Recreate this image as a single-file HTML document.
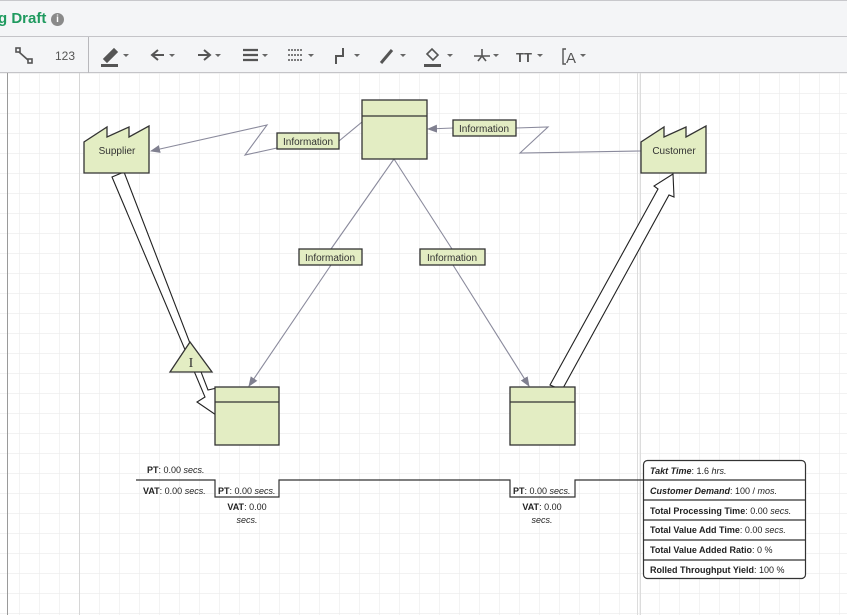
<!DOCTYPE html>
<html><head><meta charset="utf-8"><style>
html,body{margin:0;padding:0;width:847px;height:615px;overflow:hidden;background:#fff;font-family:"Liberation Sans",sans-serif}
.top{position:absolute;left:0;top:0;width:847px;height:36px;background:#f4f5f7;border-top:1px solid #c8c8cc;box-sizing:border-box}
.title{position:absolute;left:-2px;top:9px;font-size:15px;font-weight:bold;color:#1f9a5f}
.info{position:absolute;left:51px;top:12px;width:13px;height:13px;border-radius:50%;background:#8a8a8a;color:#fff;font-size:10px;font-weight:bold;text-align:center;line-height:13px}
.tb{position:absolute;left:0;top:36px;width:847px;height:37px;background:#f4f5f7;border-top:1px solid #c4c4c8;border-bottom:1px solid #c4c4c8;box-sizing:border-box}
.sep{position:absolute;left:88px;top:0;width:1px;height:36px;background:#b8b8bc}
</style></head><body>
<div class="top"><div class="title">g Draft</div><div class="info">i</div></div>
<div class="tb"><div class="sep"></div>
<svg width="847" height="36" style="position:absolute;left:0;top:0" fill="none" stroke="#555" stroke-width="1.6">
<rect x="16" y="11" width="4" height="4"/><rect x="28" y="22" width="4" height="4"/><path d="M19 15 L28 23"/>
<text x="55" y="23" font-size="12" fill="#555" stroke="none" font-family="Liberation Sans">123</text>
<path d="M104 22 L114 12 L117 15 L107 25 Z" fill="#555"/><rect x="101" y="27" width="17" height="3" fill="#555" stroke="none"/>
<path d="M158 13 L152 18 L158 23 M153 18 H164" stroke-width="2"/>
<path d="M204 13 L210 18 L204 23 M198 18 H209" stroke-width="2"/>
<path d="M243 13 H258 M243 18 H258 M243 23 H258" stroke-width="2.2"/>
<path d="M288 13 H303 M288 18 H303 M288 23 H303" stroke-width="1.6" stroke-dasharray="2 1"/>
<path d="M336 27 V19 H343 V11" stroke-width="2"/>
<path d="M381 26 L392 13" stroke-width="3"/>
<path d="M427 17 L432 12 L438 18 L433 23 Z" stroke-width="1.6"/><rect x="424" y="27" width="17" height="3" fill="#555" stroke="none"/>
<path d="M474 19 H490 M482 19 V12 M478 24 L482 19 L486 24" stroke-width="1.6"/>
<text x="516" y="25" font-size="13" font-weight="bold" fill="#555" stroke="none" font-family="Liberation Sans">TT</text>
<path d="M566 12 H563 V27 H566" stroke-width="1.4"/><text x="566" y="26" font-size="15" fill="#555" stroke="none" font-family="Liberation Sans">A</text>
<g fill="#666" stroke="none">
<path d="M123 17 h6 l-3 3z"/><path d="M169 17 h6 l-3 3z"/><path d="M215 17 h6 l-3 3z"/><path d="M262 17 h6 l-3 3z"/><path d="M308 17 h6 l-3 3z"/><path d="M354 17 h6 l-3 3z"/><path d="M400 17 h6 l-3 3z"/><path d="M447 17 h6 l-3 3z"/><path d="M493 17 h6 l-3 3z"/><path d="M537 17 h6 l-3 3z"/><path d="M580 17 h6 l-3 3z"/>
</g></svg></div>
<svg width="847" height="542" viewBox="0 73 847 542" style="position:absolute;left:0;top:73px" font-family="Liberation Sans">
<defs><pattern id="g" x="19" y="13" width="20" height="20" patternUnits="userSpaceOnUse"><path d="M0 0 V20 M0 0 H20" stroke="#ebebeb" stroke-width="1.2" fill="none"/></pattern>
<marker id="ar" markerWidth="10" markerHeight="8" refX="9" refY="4" orient="auto" markerUnits="userSpaceOnUse"><path d="M0 0 L10 4 L0 8 Z" fill="#808090"/></marker></defs>
<rect x="0" y="73" width="847" height="542" fill="url(#g)"/>
<path d="M7.5 73 V615" stroke="#9a9a9a"/><path d="M79.5 73 V615" stroke="#d6d6d6"/>
<path d="M637.5 73 V615 M640.5 73 V615" stroke="#dcdcdc"/>
<g stroke="#8a8a9c" stroke-width="1.1" fill="none">
<path d="M362 122 L339 141"/><path d="M277 148 L245 155 L267 125 L151 151" marker-end="url(#ar)"/>
<path d="M641 151 L520 153 L548 127 L516 128"/><path d="M453 128 L428 129" marker-end="url(#ar)"/>
<path d="M394 159 L331 249"/><path d="M331 265 L249 386" marker-end="url(#ar)"/>
<path d="M394 159 L452 249"/><path d="M453 265 L529 386" marker-end="url(#ar)"/>
</g>
<g stroke="#222" stroke-width="1.1" fill="#fff">
<path d="M112 177 L124 172 L208 390 L217 388 L216 415 L197 402 L205 397 Z"/>
<path d="M550 385 L562 390 L669 195 L674 197 L673 174 L654 186 L658 189 Z"/>
</g>
<g stroke="#333" stroke-width="1.3" fill="#e3edc3">
<path d="M84 173 V142 L107 127 V137 L129 127 V137 L149 126 V173 Z"/>
<path d="M641 173 V142 L664 127 V137 L686 127 V137 L706 126 V173 Z"/>
<rect x="362" y="100" width="65" height="59"/><path d="M362 116 H427"/>
<rect x="215" y="387" width="64" height="58"/><path d="M215 402 H279"/>
<rect x="510" y="387" width="65" height="58"/><path d="M510 402 H575"/>
<path d="M170 372 L190 342 L212 372 Z"/>
<rect x="277" y="133" width="62" height="16"/><rect x="453" y="120" width="63" height="16"/>
<rect x="299" y="249" width="63" height="16"/><rect x="420" y="249" width="65" height="16"/>
</g>
<g font-size="10" fill="#333" text-anchor="middle">
<text x="117" y="154">Supplier</text><text x="674" y="154">Customer</text>
<text x="308" y="145">Information</text><text x="484" y="132">Information</text>
<text x="330" y="261">Information</text><text x="452" y="261">Information</text>
<text x="191" y="367" font-size="14" font-family="Liberation Serif">I</text>
</g>
<path d="M136 480 H215 V497 H279 V480 H510 V497 H575 V480 H643" stroke="#333" stroke-width="1.2" fill="none"/>
<g font-size="9" fill="#222">
<text x="147" y="473"><tspan font-weight="bold">PT</tspan>: 0.00 <tspan font-style="italic">secs.</tspan></text>
<text x="143" y="494"><tspan font-weight="bold">VAT</tspan>: 0.00 <tspan font-style="italic">secs.</tspan></text>
<text x="218" y="494"><tspan font-weight="bold">PT</tspan>: 0.00 <tspan font-style="italic">secs.</tspan></text>
<text x="513" y="494"><tspan font-weight="bold">PT</tspan>: 0.00 <tspan font-style="italic">secs.</tspan></text>
<g text-anchor="middle"><text x="247" y="510"><tspan font-weight="bold">VAT</tspan>: 0.00</text><text x="247" y="523" font-style="italic">secs.</text>
<text x="542" y="510"><tspan font-weight="bold">VAT</tspan>: 0.00</text><text x="542" y="523" font-style="italic">secs.</text></g>
</g>
<rect x="643.5" y="460.5" width="162" height="118" rx="4" fill="#fff" stroke="#333" stroke-width="1.2"/>
<path d="M643 480 H806 M643 500 H806 M643 520 H806 M643 540 H806 M643 560 H806" stroke="#333" stroke-width="1.2"/>
<g font-size="9" fill="#222">
<text x="650" y="474"><tspan font-weight="bold" font-style="italic">Takt Time</tspan>: 1.6 <tspan font-style="italic">hrs.</tspan></text>
<text x="650" y="494"><tspan font-weight="bold" font-style="italic">Customer Demand</tspan>: 100 / <tspan font-style="italic">mos.</tspan></text>
<text x="650" y="514"><tspan font-weight="bold">Total Processing Time</tspan>: 0.00 <tspan font-style="italic">secs.</tspan></text>
<text x="650" y="533"><tspan font-weight="bold">Total Value Add Time</tspan>: 0.00 <tspan font-style="italic">secs.</tspan></text>
<text x="650" y="553"><tspan font-weight="bold">Total Value Added Ratio</tspan>: 0 %</text>
<text x="650" y="573"><tspan font-weight="bold">Rolled Throughput Yield</tspan>: 100 %</text>
</g>
</svg>
</body></html>
